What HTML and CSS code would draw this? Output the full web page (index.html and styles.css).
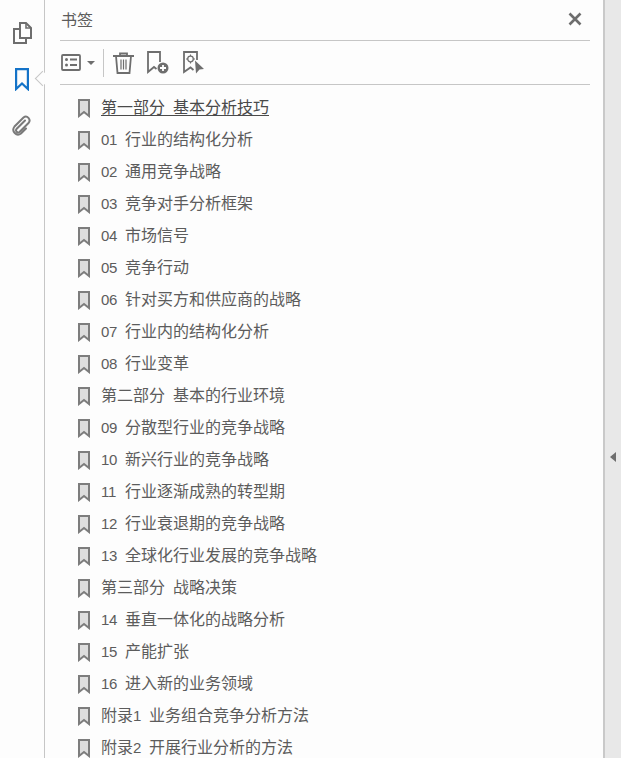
FILE: index.html
```html
<!DOCTYPE html>
<html lang="zh-CN">
<head>
  <meta charset="UTF-8">
  <title>书签</title>
  <link rel="stylesheet" href="styles.css">
</head>
<body>

<svg class="defs" width="0" height="0">
  <symbol id="mark" viewBox="0 0 12 19">
    <path d="M1 1H11V17L6 13L1 17Z" fill="#dedede" stroke="#7d7d7d" stroke-width="2"/>
  </symbol>
</svg>

<nav class="rail">
  <svg class="rail-icon" width="19" height="22" viewBox="0 0 19 22" fill="none" stroke="#6e6e6e" stroke-width="2">
    <path d="M7 1H13L18 6V16H7Z"/>
    <path d="M13 1V6H18" stroke-width="1.6"/>
    <path d="M7 7H1V21H13V16"/>
  </svg>
  <svg class="rail-icon" width="14" height="23" viewBox="0 0 14 23" fill="none" stroke="#1473c8" stroke-width="2.200">
    <path d="M1.100 1.100H12.900V21L7 15.500L1.100 21Z"/>
  </svg>
  <svg class="rail-icon" width="20" height="21" viewBox="0 0 20 21" fill="none" stroke="#7a7a7a" stroke-width="2" stroke-linecap="round">
    <path d="M13 5.500L4.500 14C3 16 5.500 18.500 7.500 17L16.500 8C19.500 4.500 15 -0.500 11.500 2.500L2.500 11.500C-1 16 4.500 22 9 18.500L14 13.500"/>
  </svg>
</nav>

<main class="panel">
  <header class="title-bar">
    <h1>书签</h1>
    <svg class="close" width="14" height="14" viewBox="0 0 14 14" stroke="#6e6e6e" stroke-width="2.600">
      <path d="M1.500 1.500L12.500 12.500M12.500 1.500L1.500 12.500"/>
    </svg>
  </header>

  <div class="toolbar">
    <svg width="20" height="17" viewBox="0 0 20 17" fill="none" stroke="#6e6e6e" stroke-width="1.800">
      <rect x="1" y="1" width="18" height="15" rx="1"/>
      <circle cx="5.500" cy="5.500" r="1.500" fill="#6e6e6e" stroke="none"/>
      <circle cx="5.500" cy="11" r="1.500" fill="#6e6e6e" stroke="none"/>
      <path d="M9 5.500H16M9 11H16"/>
    </svg>
    <span class="caret"></span>
    <span class="sep"></span>
    <svg class="trash" width="21" height="22" viewBox="0 0 21 22" fill="none" stroke="#6e6e6e" stroke-width="1.800">
      <path d="M0 4H21" stroke-width="2"/>
      <path d="M7 4V1.500H14V4"/>
      <path d="M3 4L4.500 21H16.500L18 4"/>
      <path d="M8 7.500V17.500M10.500 7.500V17.500M13 7.500V17.500" stroke-width="1.200"/>
    </svg>
    <svg class="add" width="22" height="23" viewBox="0 0 22 23" fill="none" stroke="#6e6e6e" stroke-width="1.800">
      <path d="M13 11V1H1V21L7 16L9.500 18"/>
      <circle cx="16" cy="17" r="5.500" fill="#6e6e6e" stroke="none"/>
      <path d="M13 17H19M16 14V20" stroke="#fff" stroke-width="1.800"/>
    </svg>
    <svg class="find" width="21" height="23" viewBox="0 0 21 23" fill="none" stroke="#6e6e6e" stroke-width="1.800">
      <path d="M14 9V1H1V21L7.500 16.500L10.500 19"/>
      <circle cx="7.500" cy="8" r="2.800" stroke-width="1.300"/>
      <path d="M7.500 3.500V5M7.500 11V12.500M3 8H4.500M10.500 8H12" stroke-width="1.100"/>
      <path d="M12 9.500L21 18L16.500 18.500L13 22.500Z" fill="#6e6e6e" stroke="none"/>
    </svg>
  </div>

  <ul class="marks">
    <li><svg width="12" height="19"><use href="#mark"/></svg><a class="current"><span>第一部分</span><span>基本分析技巧</span></a></li>
    <li><svg width="12" height="19"><use href="#mark"/></svg><a><span class="num">01</span><span>行业的结构化分析</span></a></li>
    <li><svg width="12" height="19"><use href="#mark"/></svg><a><span class="num">02</span><span>通用竞争战略</span></a></li>
    <li><svg width="12" height="19"><use href="#mark"/></svg><a><span class="num">03</span><span>竞争对手分析框架</span></a></li>
    <li><svg width="12" height="19"><use href="#mark"/></svg><a><span class="num">04</span><span>市场信号</span></a></li>
    <li><svg width="12" height="19"><use href="#mark"/></svg><a><span class="num">05</span><span>竞争行动</span></a></li>
    <li><svg width="12" height="19"><use href="#mark"/></svg><a><span class="num">06</span><span>针对买方和供应商的战略</span></a></li>
    <li><svg width="12" height="19"><use href="#mark"/></svg><a><span class="num">07</span><span>行业内的结构化分析</span></a></li>
    <li><svg width="12" height="19"><use href="#mark"/></svg><a><span class="num">08</span><span>行业变革</span></a></li>
    <li><svg width="12" height="19"><use href="#mark"/></svg><a><span>第二部分</span><span>基本的行业环境</span></a></li>
    <li><svg width="12" height="19"><use href="#mark"/></svg><a><span class="num">09</span><span>分散型行业的竞争战略</span></a></li>
    <li><svg width="12" height="19"><use href="#mark"/></svg><a><span class="num">10</span><span>新兴行业的竞争战略</span></a></li>
    <li><svg width="12" height="19"><use href="#mark"/></svg><a><span class="num">11</span><span>行业逐渐成熟的转型期</span></a></li>
    <li><svg width="12" height="19"><use href="#mark"/></svg><a><span class="num">12</span><span>行业衰退期的竞争战略</span></a></li>
    <li><svg width="12" height="19"><use href="#mark"/></svg><a><span class="num">13</span><span>全球化行业发展的竞争战略</span></a></li>
    <li><svg width="12" height="19"><use href="#mark"/></svg><a><span>第三部分</span><span>战略决策</span></a></li>
    <li><svg width="12" height="19"><use href="#mark"/></svg><a><span class="num">14</span><span>垂直一体化的战略分析</span></a></li>
    <li><svg width="12" height="19"><use href="#mark"/></svg><a><span class="num">15</span><span>产能扩张</span></a></li>
    <li><svg width="12" height="19"><use href="#mark"/></svg><a><span class="num">16</span><span>进入新的业务领域</span></a></li>
    <li><svg width="12" height="19"><use href="#mark"/></svg><a><span>附录<span class="num">1</span></span><span>业务组合竞争分析方法</span></a></li>
    <li><svg width="12" height="19"><use href="#mark"/></svg><a><span>附录<span class="num">2</span></span><span>开展行业分析的方法</span></a></li>
  </ul>
</main>

<aside class="gutter">
  <span class="expand"></span>
</aside>

</body>
</html>
```

FILE: styles.css
```css
* {
  box-sizing: border-box;
}

html, body {
  height: 100%;
  margin: 0;
  overflow: hidden;
}

body {
  display: flex;
  font-family: "Noto Sans CJK SC", sans-serif;
  background: #fdfdfd;
  color: #5c5c5c;
}

.defs {
  position: absolute;
}

.rail {
  position: relative;
  width: 45px;
  flex: none;
  border-right: 1px solid #c6c6c6;
  display: flex;
  flex-direction: column;
  align-items: center;
  gap: 24px;
  padding-top: 22px;
}

.rail-icon {
  flex: none;
}

/* little notch pointing at the active tab */
.rail::after {
  content: "";
  position: absolute;
  top: 73px;
  right: -4px;
  width: 10px;
  height: 10px;
  background: #fdfdfd;
  border-left: 1px solid #c6c6c6;
  border-bottom: 1px solid #c6c6c6;
  transform: rotate(45deg);
}

.panel {
  flex: 1;
  min-width: 0;
  padding: 0 13px 0 15px;
  display: flex;
  flex-direction: column;
}

.title-bar {
  height: 41px;
  flex: none;
  display: flex;
  align-items: center;
  justify-content: space-between;
  padding: 0 8px 2px 1px;
  border-bottom: 1px solid #c6c6c6;
}

.title-bar h1 {
  margin: 0;
  font-size: 16px;
  line-height: 20px;
  font-weight: 400;
}

.close {
  margin-top: -1px;
}

.toolbar {
  height: 44px;
  flex: none;
  display: flex;
  align-items: center;
  padding-left: 1px;
  border-bottom: 1px solid #c6c6c6;
}

.caret {
  margin-left: 6px;
  border-top: 4px solid #6e6e6e;
  border-left: 4px solid transparent;
  border-right: 4px solid transparent;
}

.sep {
  width: 1px;
  height: 28px;
  margin: 0 9px 0 8px;
  background: #c6c6c6;
}

.add {
  margin-left: 13px;
}

.find {
  margin-left: 14px;
}

.marks {
  list-style: none;
  margin: 0;
  padding: 7px 0 0 18px;
}

.marks li {
  height: 32px;
  display: flex;
  align-items: center;
  gap: 11px;
  font-size: 16px;
  white-space: nowrap;
}

.marks svg {
  flex: none;
}

.marks a {
  display: flex;
  align-items: baseline;
  gap: 8px;
  height: 18px;
  line-height: 18px;
  margin-top: -4px;
}

.marks a.current {
  height: 19px;
  margin-top: -3px;
  color: #4a4a4a;
  border-bottom: 1px solid #4a4a4a;
}

.num {
  min-width: 16px;
  font-family: "Liberation Sans", sans-serif;
  font-size: 15px;
  letter-spacing: -0.300px;
}

.gutter {
  width: 18px;
  flex: none;
  background: #e8e8e8;
  border-left: 2px solid #c9c9c9;
  display: flex;
  align-items: center;
  justify-content: center;
  padding-top: 155px;
}

.expand {
  border-right: 6px solid #6e6e6e;
  border-top: 5px solid transparent;
  border-bottom: 5px solid transparent;
}
```
